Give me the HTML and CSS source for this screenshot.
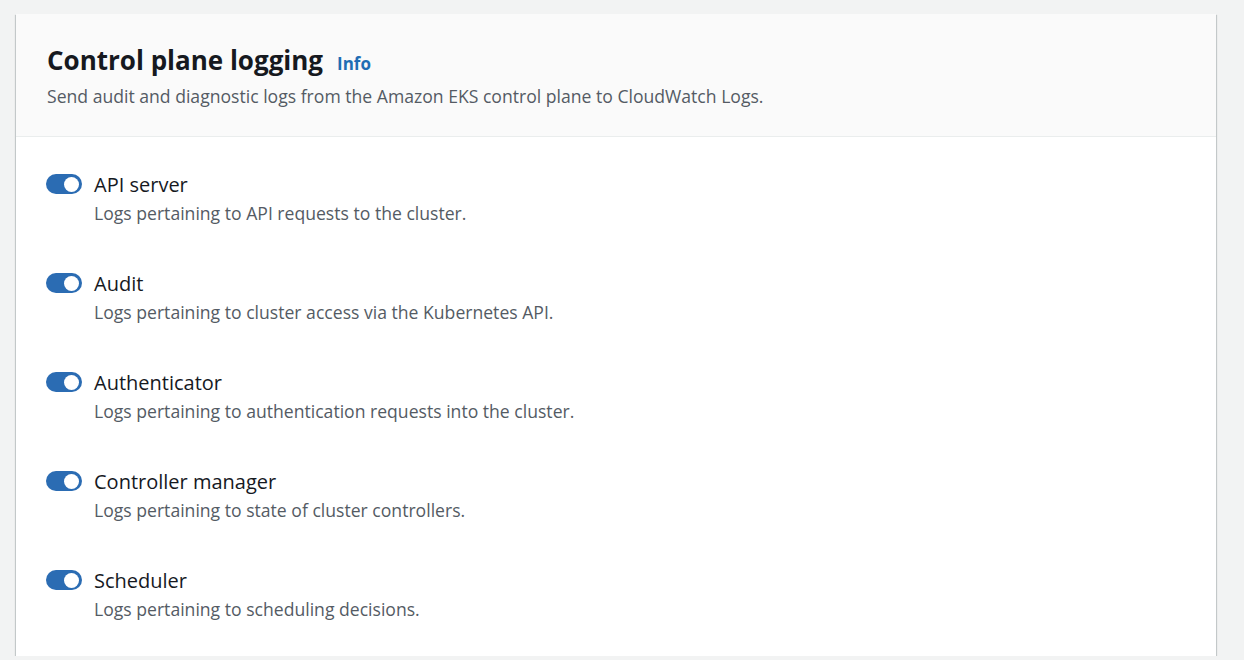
FILE: index.html
```html
<!DOCTYPE html>
<html lang="en">
<head>
<meta charset="utf-8">
<title>Control plane logging</title>
<link rel="stylesheet" href="styles.css">
</head>
<body>
<div class="page">
  <section class="card">
    <header class="card-header">
      <h2 class="title">Control plane logging <a class="info" href="#">Info</a></h2>
      <p class="subtitle">Send audit and diagnostic logs from the Amazon EKS control plane to CloudWatch Logs.</p>
    </header>
    <div class="card-body">
      <div class="row">
        <span class="toggle"><span class="knob"></span></span>
        <div class="text">
          <div class="label">API server</div>
          <div class="desc">Logs pertaining to API requests to the cluster.</div>
        </div>
      </div>
      <div class="row">
        <span class="toggle"><span class="knob"></span></span>
        <div class="text">
          <div class="label">Audit</div>
          <div class="desc">Logs pertaining to cluster access via the Kubernetes API.</div>
        </div>
      </div>
      <div class="row">
        <span class="toggle"><span class="knob"></span></span>
        <div class="text">
          <div class="label">Authenticator</div>
          <div class="desc">Logs pertaining to authentication requests into the cluster.</div>
        </div>
      </div>
      <div class="row">
        <span class="toggle"><span class="knob"></span></span>
        <div class="text">
          <div class="label">Controller manager</div>
          <div class="desc">Logs pertaining to state of cluster controllers.</div>
        </div>
      </div>
      <div class="row">
        <span class="toggle"><span class="knob"></span></span>
        <div class="text">
          <div class="label">Scheduler</div>
          <div class="desc">Logs pertaining to scheduling decisions.</div>
        </div>
      </div>
    </div>
  </section>
</div>
</body>
</html>
```

FILE: styles.css
```css
html, body {
  margin: 0;
  padding: 0;
  background: #f2f3f3;
  font-family: "Open Sans", "Noto Sans", Arial, sans-serif;
  color: #16191f;
}
.page {
  padding: 14px 28px 0 16px;
}
.card {
  background: #ffffff;
  box-shadow: 0 1px 1px 0 rgba(0, 28, 36, 0.3), 1px 1px 1px 0 rgba(0, 28, 36, 0.15), -1px 1px 1px 0 rgba(0, 28, 36, 0.15);
}
.card-header {
  background: #fafafa;
  border-bottom: 1px solid #eaeded;
  padding: 30px 30px 28px 31px;
}
.title {
  margin: 0;
  font-size: 26px;
  font-weight: 700;
  line-height: 32px;
  color: #16191f;
  display: flex;
  align-items: baseline;
  gap: 14px;
}
.info {
  font-size: 17px;
  font-weight: 700;
  color: #1f6db4;
  text-decoration: none;
}
.subtitle {
  margin: 4px 0 0;
  font-size: 17.6px;
  line-height: 24px;
  color: #545b64;
}
.card-body {
  padding: 34px 30px 33px 30px;
  display: flex;
  flex-direction: column;
  gap: 43px;
}
.row {
  display: flex;
  align-items: flex-start;
  gap: 12px;
}
.toggle {
  flex: none;
  width: 36px;
  height: 20px;
  border-radius: 10px;
  background: #2b6cb3;
  margin-top: 3px;
  display: flex;
  align-items: center;
  justify-content: flex-end;
  padding-right: 3px;
  box-sizing: border-box;
}
.knob {
  width: 15px;
  height: 15px;
  border-radius: 50%;
  background: #ffffff;
}
.label {
  font-size: 20px;
  line-height: 28px;
  color: #16191f;
}
.desc {
  font-size: 17.6px;
  line-height: 28px;
  color: #545b64;
}
```
